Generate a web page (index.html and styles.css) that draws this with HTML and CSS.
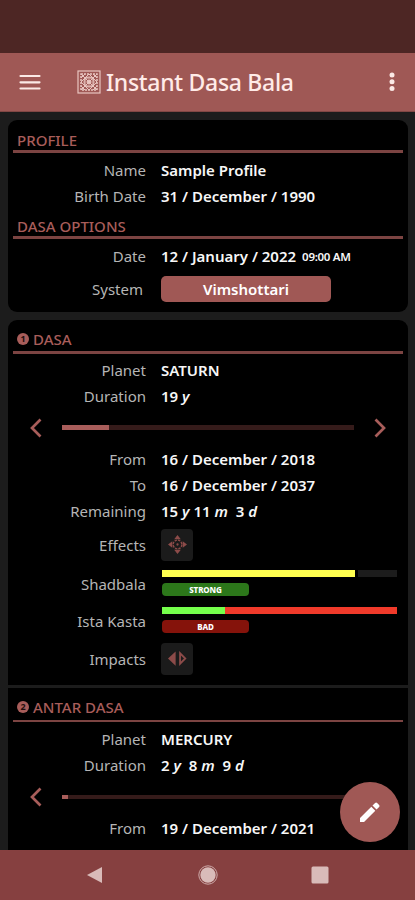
FILE: index.html
```html
<!DOCTYPE html>
<html lang="en">
<head>
<meta charset="utf-8">
<meta name="viewport" content="width=device-width">
<title>Instant Dasa Bala</title>
<link rel="stylesheet" href="styles.css">
</head>
<body>
<div class="app">
  <div class="status"></div>
  <header class="bar">
    <svg class="menu" viewBox="0 0 22 18"><path d="M1.5 3h19M1.5 9.300h19M1.5 15.500h19" fill="none" stroke="#fbe9e6" stroke-width="2.200" stroke-linecap="round"/></svg>
    <svg class="logo" viewBox="0 0 24 24" fill="none" stroke="#e9c5c0">
      <rect x="1" y="1" width="22" height="22" stroke-width="1.200"/>
      <rect x="4" y="4" width="16" height="16" stroke-width="1.500" stroke-dasharray="2 1"/>
      <path d="M4 4l16 16M20 4L4 20M4 12l8-8 8 8-8 8zM4 8l4-4M16 4l4 4M20 16l-4 4M8 20l-4-4"/>
      <rect x="8" y="8" width="8" height="8"/><circle cx="12" cy="12" r="5"/><circle cx="12" cy="12" r="2" fill="#e9c5c0"/>
    </svg>
    <h1>Instant Dasa Bala</h1>
    <svg class="more" viewBox="0 0 6 20" fill="#fbe9e6"><circle cx="3" cy="3" r="2.500"/><circle cx="3" cy="9.700" r="2.500"/><circle cx="3" cy="16.400" r="2.500"/></svg>
  </header>
  <main>
    <section class="card options">
      <h2 class="t-profile"><span>PROFILE</span></h2>
      <div class="row"><span class="label l-name">Name</span><b class="v-name">Sample Profile</b></div>
      <div class="row"><span class="label l-birth">Birth Date</span><b class="v-date">31 / December / 1990</b></div>
      <h2 class="second t-options"><span>DASA OPTIONS</span></h2>
      <div class="row date"><span class="label">Date</span><b class="v-now">12 / January / 2022</b><b class="time">09:00 AM</b></div>
      <div class="row system"><span class="label">System</span><button class="select">Vimshottari</button></div>
    </section>
    <section class="card">
      <div class="dasa">
        <h2 class="t-dasa"><i class="num">1</i><span>DASA</span></h2>
        <div class="row"><span class="label l-planet">Planet</span><b class="v-planet">SATURN</b></div>
        <div class="row"><span class="label l-duration">Duration</span><b class="v-dur">19 <em>y</em></b></div>
        <div class="slider">
          <svg class="arrow" viewBox="0 0 12 20"><path d="M10.500 1.500L2 10l8.500 8.500"/></svg>
          <div class="track"><div class="fill"></div></div>
          <svg class="arrow" viewBox="0 0 12 20"><path d="M1.500 1.500L10 10l-8.500 8.500"/></svg>
        </div>
        <div class="row"><span class="label l-from">From</span><b class="v-date">16 / December / 2018</b></div>
        <div class="row"><span class="label">To</span><b class="v-date">16 / December / 2037</b></div>
        <div class="row"><span class="label l-remaining">Remaining</span><b class="v-rem">15 <em>y</em> 11 <em>m</em>&nbsp; 3 <em>d</em></b></div>
        <div class="row effects"><span class="label l-effects">Effects</span><button class="tool"><svg viewBox="0 0 20 20"><path d="M10 0l3.500 4.500h-7zM10 20l-3.500-4.500h7zM0 10l4.500-3.500v7zM20 10l-4.500-3.500v7z"/><circle cx="10" cy="10" r="4.600" fill="none" stroke="#8c4b49" stroke-width="1.500" stroke-dasharray="2.500 1.100"/><circle cx="10" cy="10" r="1.200"/></svg></button></div>
        <div class="row meter"><span class="label l-shad">Shadbala</span><div class="gauge"><div class="bars shad"><i></i><i></i></div><span class="badge strong">STRONG</span></div></div>
        <div class="row meter"><span class="label l-ista">Ista Kasta</span><div class="gauge"><div class="bars ista"><i></i><i></i></div><span class="badge bad">BAD</span></div></div>
        <div class="row impacts"><span class="label l-impacts">Impacts</span><button class="tool"><svg viewBox="0 0 20 20"><path d="M8 2.500v15L0 10z"/><path d="M12.700 4.500v11l5.500-5.500z" fill="none" stroke="#8c4b49" stroke-width="1.900"/></svg></button></div>
      </div>
      <div class="dasa antar">
        <h2 class="t-antar"><i class="num">2</i><span>ANTAR DASA</span></h2>
        <div class="row"><span class="label l-planet">Planet</span><b class="v-planet">MERCURY</b></div>
        <div class="row"><span class="label l-duration">Duration</span><b class="v-dur2">2 <em>y</em>&nbsp; 8 <em>m</em>&nbsp; 9 <em>d</em></b></div>
        <div class="slider">
          <svg class="arrow" viewBox="0 0 12 20"><path d="M10.500 1.500L2 10l8.500 8.500"/></svg>
          <div class="track"><div class="fill"></div></div>
          <svg class="arrow" viewBox="0 0 12 20"><path d="M1.500 1.500L10 10l-8.500 8.500"/></svg>
        </div>
        <div class="row"><span class="label l-from">From</span><b class="v-date">19 / December / 2021</b></div>
        <div class="row"><span class="label">To</span><b class="v-date">28 / August / 2024</b></div>
      </div>
    </section>
  </main>
  <button class="fab"><svg viewBox="0 0 22 22" fill="#fff"><path d="M1 17v4h4L16.300 9.700l-4-4zM13.500 4.500l4 4 2.600-2.600q1-1 0-2l-2-2q-1-1-2 0z"/></svg></button>
  <nav>
    <svg viewBox="0 0 18 20"><path d="M1 10L16 2v16z"/></svg>
    <svg viewBox="0 0 20 20"><circle cx="10" cy="10" r="7.700"/><circle cx="10" cy="10" r="9.200" fill="none" stroke="#cda9a8" stroke-width="1"/></svg>
    <svg viewBox="0 0 18 20"><rect x=".5" y="1.500" width="17" height="17" rx="1.500"/></svg>
  </nav>
</div>
</body>
</html>
```
FILE: styles.css
```css
* { box-sizing: border-box; }
body { margin: 0; background: #1c1c1c; }
button { border: 0; padding: 0; font: inherit; }
.app {
  position: relative;
  height: 900px;
  overflow: hidden;
  display: flex;
  flex-direction: column;
  font: 15px/20px "Noto Sans", sans-serif;
  color: #f7f7f7;
}
.status { flex: 0 0 53px; background: #4d2624; }
.bar {
  flex: 0 0 59px;
  display: flex;
  align-items: center;
  padding: 0 20px 0 19px;
  background: #9f5855;
  border-bottom: 1px solid #814744;
}
.menu { width: 22px; height: 18px; margin-right: 36px; }
.logo { width: 24px; height: 24px; margin-right: 5px; }
h1 { margin: 0; font-size: 23px; line-height: 30px; font-weight: 500; color: #ffebe8; letter-spacing: -.3px; white-space: nowrap; }
.more { width: 6px; height: 20px; margin-left: auto; }
main { flex: 1; min-height: 0; overflow: hidden; padding: 8px 7px 0 8px; }
.card { background: #000; border-radius: 9px; overflow: hidden; }
.options { height: 192px; margin-bottom: 8px; padding: 0 5px; }
h2 {
  margin: 0 0 4px;
  height: 33px;
  padding: 10px 0 0 4px;
  display: flex;
  align-items: flex-start;
  border-bottom: 3px solid #7c4442;
  font-size: 15px;
  line-height: 20px;
  font-weight: 500;
  color: #a85d5a;
}
.second { height: 29px; padding-top: 6px; }
.row { height: 26.300px; display: flex; align-items: center; white-space: nowrap; }
.label { flex: 0 0 133px; margin-right: 15px; text-align: right; color: #b5b5b5; }
.row b { font-weight: 600; }
em { font-style: italic; }
.date { height: 27px; }
.row .time { font-size: 11.500px; margin-left: 6px; letter-spacing: -.3px; padding-top: 2px; }
.system { height: 38px; }
.system .label { flex-basis: 130px; margin-right: 18px; }
.select { width: 170px; height: 26px; border-radius: 5px; background: #a05855; color: #fff; font-weight: 600; }
.dasa { height: 365px; padding: 0 5px; }
.dasa h2 { height: 34px; margin-bottom: 3px; padding-top: 9px; }
.antar { border-top: 3px solid #1c1c1c; height: 300px; }
.antar h2 { height: 34px; border-width: 2px; margin-bottom: 4px; }
.num {
  width: 12px; height: 12px; margin: 4px 4px 0 0; border-radius: 50%;
  background: #a85d5a; color: #210d0c; font: bold 9px/12px "Noto Sans", sans-serif; text-align: center;
}
.slider { height: 36px; display: flex; align-items: center; padding: 0 17px; }
.arrow { width: 12px; height: 20px; fill: none; stroke: #a85d5a; stroke-width: 2.700; }
.track { flex: 1; height: 5px; margin: 0 20px; background: #351b1a; }
.fill { width: 47px; height: 5px; background: #a85d5a; }
.antar .track { height: 4px; }
.antar .fill { width: 6px; height: 4px; }
.effects { height: 41px; }
.tool { width: 32px; height: 32px; border-radius: 4px; background: #1b1b1b; display: grid; place-items: center; }
.tool svg { width: 19px; height: 19px; fill: #8c4b49; }
.meter { height: 37px; }
.gauge { width: 235px; height: 27px; margin-left: 1px; }
.bars { display: flex; height: 7px; margin-bottom: 6px; }
.shad { gap: 3px; }
.shad i:first-child { width: 193px; background: #ffff50; }
.shad i:last-child { flex: 1; background: #1c1c1c; }
.ista i:first-child { width: 63px; background: #75ff4b; }
.ista i:last-child { flex: 1; background: #f03a2a; }
.badge { display: block; width: 87px; height: 13px; border-radius: 4px; font-size: 8px; line-height: 13px; font-weight: 800; text-align: center; color: #fff; letter-spacing: -.1px; }
.strong { background: #2c771a; }
.bad { background: #85130b; }
.impacts { height: 39px; }
.fab {
  position: absolute; left: 340px; top: 782px; width: 60px; height: 60px;
  border-radius: 50%; background: #a05855; display: grid; place-items: center;
}
.fab svg { width: 22px; height: 22px; }
nav { flex: 0 0 50px; background: #864040; display: flex; justify-content: space-between; align-items: center; padding: 0 86px 0 86px; }
nav svg { width: 18px; height: 20px; fill: #d9bbb9; }
nav svg:nth-child(2) { width: 20px; }
```
